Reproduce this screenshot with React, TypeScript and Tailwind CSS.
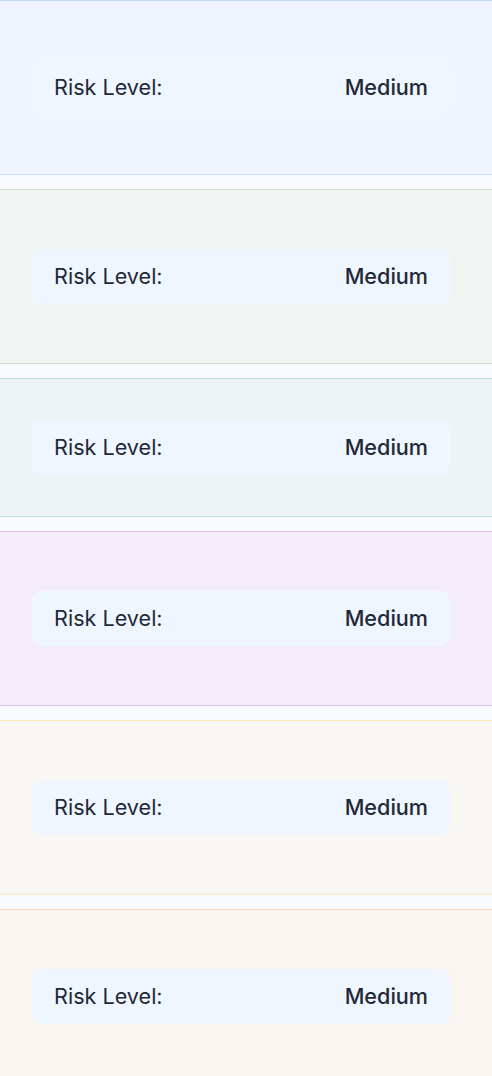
import React from "react";

const sections = [
  { bg: "bg-[#eff4ff]", border: "border-[#c3dafe]", py: "py-[59px]" },
  { bg: "bg-[#f0f5f3]", border: "border-[#cfe3d3]", py: "py-[59px]" },
  { bg: "bg-[#eef3f6]", border: "border-[#bde0dc]", py: "py-[41px]" },
  { bg: "bg-[#f4edf9]", border: "border-[#dcc6e8]", py: "py-[59px]" },
  { bg: "bg-[#f8f7f3]", border: "border-[#fbe8bc]", py: "py-[59px]" },
  { bg: "bg-[#f9f5f1]", border: "border-[#fbdcb9]", py: "py-[59px]" },
];

export default function App() {
  return (
    <div
      className="min-h-screen bg-[#f8fafd] flex flex-col gap-[14px]"
      style={{ fontFamily: "Inter, 'Noto Sans', sans-serif" }}
    >
      {sections.map((s, i) => (
        <section key={i} className={`border-y ${s.bg} ${s.border} ${s.py}`}>
          <div className="ml-8 w-[418px] h-[55px] rounded-[10px] bg-[#eff6ff] px-[22px] flex items-center justify-between text-[21.6px] text-[#1f2937]">
            <span className="font-normal">Risk Level:</span>
            <span className="font-medium">Medium</span>
          </div>
        </section>
      ))}
    </div>
  );
}
